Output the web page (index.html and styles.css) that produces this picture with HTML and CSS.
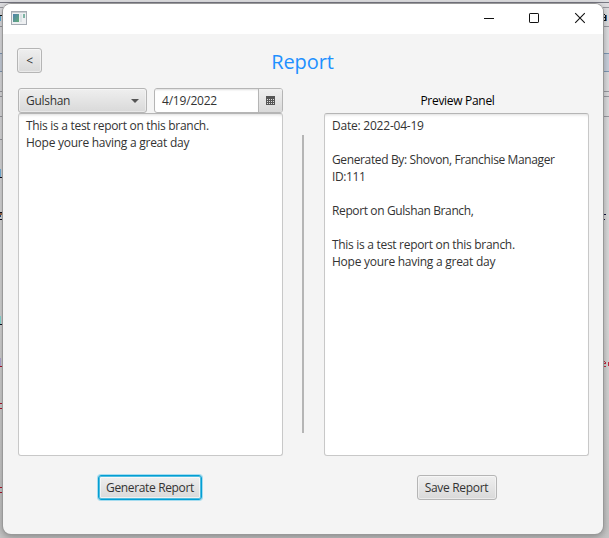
FILE: index.html
```html
<!DOCTYPE html>
<html lang="en">
<head>
<meta charset="utf-8">
<title>Report</title>
<link rel="stylesheet" href="styles.css">
</head>
<body>
<div class="desktop">
  <svg class="backdrop" width="609" height="538" viewBox="0 0 609 538" shape-rendering="crispEdges" aria-hidden="true">
    <path fill="#777782" d="M0 2h609v1H0z"/>
    <path fill="#9999a0" d="M0 7h3v1H0zM603 7h6v1h-6zM0 26h3v1H0zM603 26h6v1h-6zM0 91h3v1H0zM603 91h6v1h-6zM0 96h3v1H0zM603 96h6v1h-6zM0 116h3v1H0zM603 116h6v1h-6zM0 139h3v1H0z"/>
    <path fill="#c9d0dc" d="M0 54h3v17H0zM603 54h6v17h-6z"/>
    <path fill="#7f98b5" d="M0 53h3v1H0zM603 53h6v1h-6zM0 71h3v1H0zM603 71h6v1h-6z"/>
    <path fill="#111" d="M0 15h3v1H0z"/><path fill="#5facd6" d="M0 16h1v5H0z"/><path fill="#ddb160" d="M2 16h1v5H2z"/>
    <path fill="#76b5df" d="M0 169h1v8H0z"/><path fill="#8be0dc" d="M0 316h1v8H0z"/><path fill="#b8acd7" d="M0 358h1v8H0z"/>
    <path fill="#101020" d="M0 177h3v1H0zM0 212h3v1H0zM0 219h2v1H0zM0 324h3v1H0z"/>
    <path fill="#b0122b" d="M0 366h3v1H0zM0 403h3v1H0zM0 408h2v1H0zM0 487h2v1H0zM2 488h1v4H2zM0 492h3v1H0z"/>
    <path fill="#9c6748" d="M0 213h2v2H0z"/><path fill="#264e7f" d="M0 215h1v2H0z"/>
    <path fill="#101038" d="M603 214h3v1h-3zM603 219h2v1h-2z"/>
    <path fill="#c52c42" d="M603 361h2v1h-2zM605 362h1v1h-1zM603 363h3v1h-3zM603 366h3v1h-3zM608 362h1v4h-1z"/>
    <path fill="#111" d="M603 14h2v1h-2zM605 15h1v6h-1zM603 17h2v1h-2zM603 20h2v1h-2z"/><path fill="#3976b1" d="M606 15h1v6h-1z"/>
  </svg>
  <main class="window">
    <header class="titlebar">
      <svg class="app-icon" width="16" height="14" viewBox="0 0 16 14">
        <rect x=".5" y=".5" width="15" height="13" fill="#eef0f2" stroke="#a5abb2"/>
        <path fill="#c9cdd1" d="M1 1h14v1H1z"/>
        <defs><linearGradient id="g" x2="1" y2="1"><stop stop-color="#4c80ad"/><stop offset="1" stop-color="#65ad79"/></linearGradient></defs>
        <path fill="url(#g)" d="M2 3h6v8H2z"/>
        <path fill="#7fb5a5" d="M12 3h2v4h-2z"/>
        <path fill="#dce2e5" d="M9 3h2v8H9z"/>
      </svg>
      <svg class="controls" width="102" height="12" viewBox="0 0 102 12" fill="none" stroke="#111">
        <path d="M0 6.5h10"/>
        <rect x="45.5" y="1.5" width="9" height="9" rx=".6"/>
        <path d="M91.2 1.2l9.6 9.6M100.800 1.2l-9.600 9.600" stroke-width="1.100"/>
      </svg>
    </header>
    <div class="heading">
      <button class="btn back"><span>&lt;</span></button>
      <h1>Report</h1>
    </div>
    <div class="panels">
      <section class="panel">
        <div class="inputs">
          <div class="combo"><span>Gulshan</span>
            <svg width="8" height="4" viewBox="0 0 8 4"><path fill="#555" d="M0 0h8L4 4z"/></svg>
          </div>
          <div class="date">
            <div class="date-text">4/19/2022</div>
            <div class="date-btn">
              <svg width="9" height="9" viewBox="0 0 9 9" shape-rendering="crispEdges"><path fill="#555" d="M0 0h9v9H0z"/><path fill="#ddd" d="M1 3h1v1H1zM3 3h1v1H3zM5 3h1v1H5zM7 3h1v1H7zM1 5h1v1H1zM3 5h1v1H3zM5 5h1v1H5zM7 5h1v1H7zM1 7h1v1H1zM3 7h1v1H3zM5 7h1v1H5zM7 7h1v1H7z"/></svg>
            </div>
          </div>
        </div>
        <div class="area"><p><span class="l-test">This is a test report on this branch.</span></p><p><span class="l-hope">Hope youre having a great day</span></p></div>
        <button class="btn generate"><span>Generate Report</span></button>
      </section>
      <div class="divider"></div>
      <section class="panel">
        <div class="caption"><span>Preview Panel</span></div>
        <div class="area"><p><span class="l-date">Date: 2022-04-19</span></p><p></p><p><span class="l-by">Generated By: Shovon, Franchise Manager</span></p><p><span class="l-id">ID:111</span></p><p></p><p><span class="l-branch">Report on Gulshan Branch,</span></p><p></p><p><span class="l-test">This is a test report on this branch.</span></p><p><span class="l-hope">Hope youre having a great day</span></p></div>
        <button class="btn save"><span>Save Report</span></button>
      </section>
    </div>
  </main>
</div>
</body>
</html>
```
FILE: styles.css
```css
* { box-sizing: border-box; }
body { margin: 0; font: 12px/17px "Open Sans", "Noto Sans", sans-serif; color: #333; letter-spacing: -0.3px; overflow: hidden; }
h1, p { margin: 0; }
.desktop { width: 609px; height: 538px; padding: 4px 6px 4px 3px; position: relative; background: linear-gradient(#dedee1, #d8d8d8 60%, #c4c4c4); overflow: hidden; }
.backdrop { position: absolute; left: 0; top: 0; }
.window { position: relative; width: 600px; height: 530px; background: #f4f4f4; border-radius: 8px; overflow: hidden; box-shadow: 0 0 0 1px #999, 0 2px 7px 1px rgba(0,0,0,.3); }
.titlebar { height: 30px; background: #fff; display: flex; align-items: center; justify-content: space-between; padding: 0 17px 2px 8px; }
.heading { height: 54px; padding: 14px 15px 0 14px; display: grid; grid-template-columns: 25px 1fr 25px; }
h1 { font-size: 20px; line-height: 28px; font-weight: 400; color: #1e90ff; text-align: center; letter-spacing: -0.1px; }
.btn { font: inherit; letter-spacing: inherit; color: #333; height: 25px; padding: 0 0 1px; border: 1px solid #b5b5b5; border-radius: 3px; background: linear-gradient(#efefef, #d9d9d9); box-shadow: inset 0 0 0 1px rgba(255,255,255,.45); white-space: nowrap; }
.back { width: 25px; }
.panels { display: grid; grid-template-columns: 265px 41px 265px; padding-left: 15px; justify-content: start; }
.panel { display: flex; flex-direction: column; align-items: center; }
.divider { background: #b5b5b5; height: 298px; margin-top: 47px; margin-left: 19px; width: 2px; }
.inputs, .caption { height: 25px; width: 100%; }
.inputs { display: flex; gap: 7px; }
.combo { width: 129px; border: 1px solid #b5b5b5; border-radius: 3px; background: linear-gradient(#efefef, #d9d9d9); box-shadow: inset 0 0 0 1px rgba(255,255,255,.4); display: flex; align-items: center; justify-content: space-between; padding: 0 7px; }
.date { width: 129px; display: flex; border: 1px solid #b5b5b5; border-radius: 3px; background: #fff; overflow: hidden; }
.date-text { width: 103px; padding: 3px 7px; letter-spacing: -0.2px; box-shadow: inset 0 2px 2px -1px #ddd; }
.date-btn { flex: 1; border-left: 1px solid #b5b5b5; background: linear-gradient(#efefef, #d9d9d9); display: grid; place-items: center; }
.caption { text-align: center; color: #000; padding: 4px 0 0 2px; }
.area { width: 265px; height: 343px; border: 1px solid #c8c8c8; border-top-color: #b5b5b5; border-radius: 3px; background: #fff; box-shadow: inset 0 3px 3px -2px #ddd; padding: 3px 7px; }
.area p { height: 17px; white-space: nowrap; }
.l-test { letter-spacing: -0.3px; }
.l-hope { letter-spacing: -0.26px; }
.l-date { letter-spacing: -0.22px; }
.l-by { letter-spacing: -0.37px; }
.l-id { letter-spacing: -0.4px; }
.l-branch { letter-spacing: -0.38px; }
.generate, .save { margin-top: 19px; }
.generate { width: 104px; border: 1px solid #039ed3; box-shadow: 0 0 0 1px #a5dcef, inset 0 0 0 1px #4fbde0, inset 0 0 0 2px rgba(255,255,255,.6); margin-left: -1px; letter-spacing: -0.35px; }
.save { width: 80px; }
```
